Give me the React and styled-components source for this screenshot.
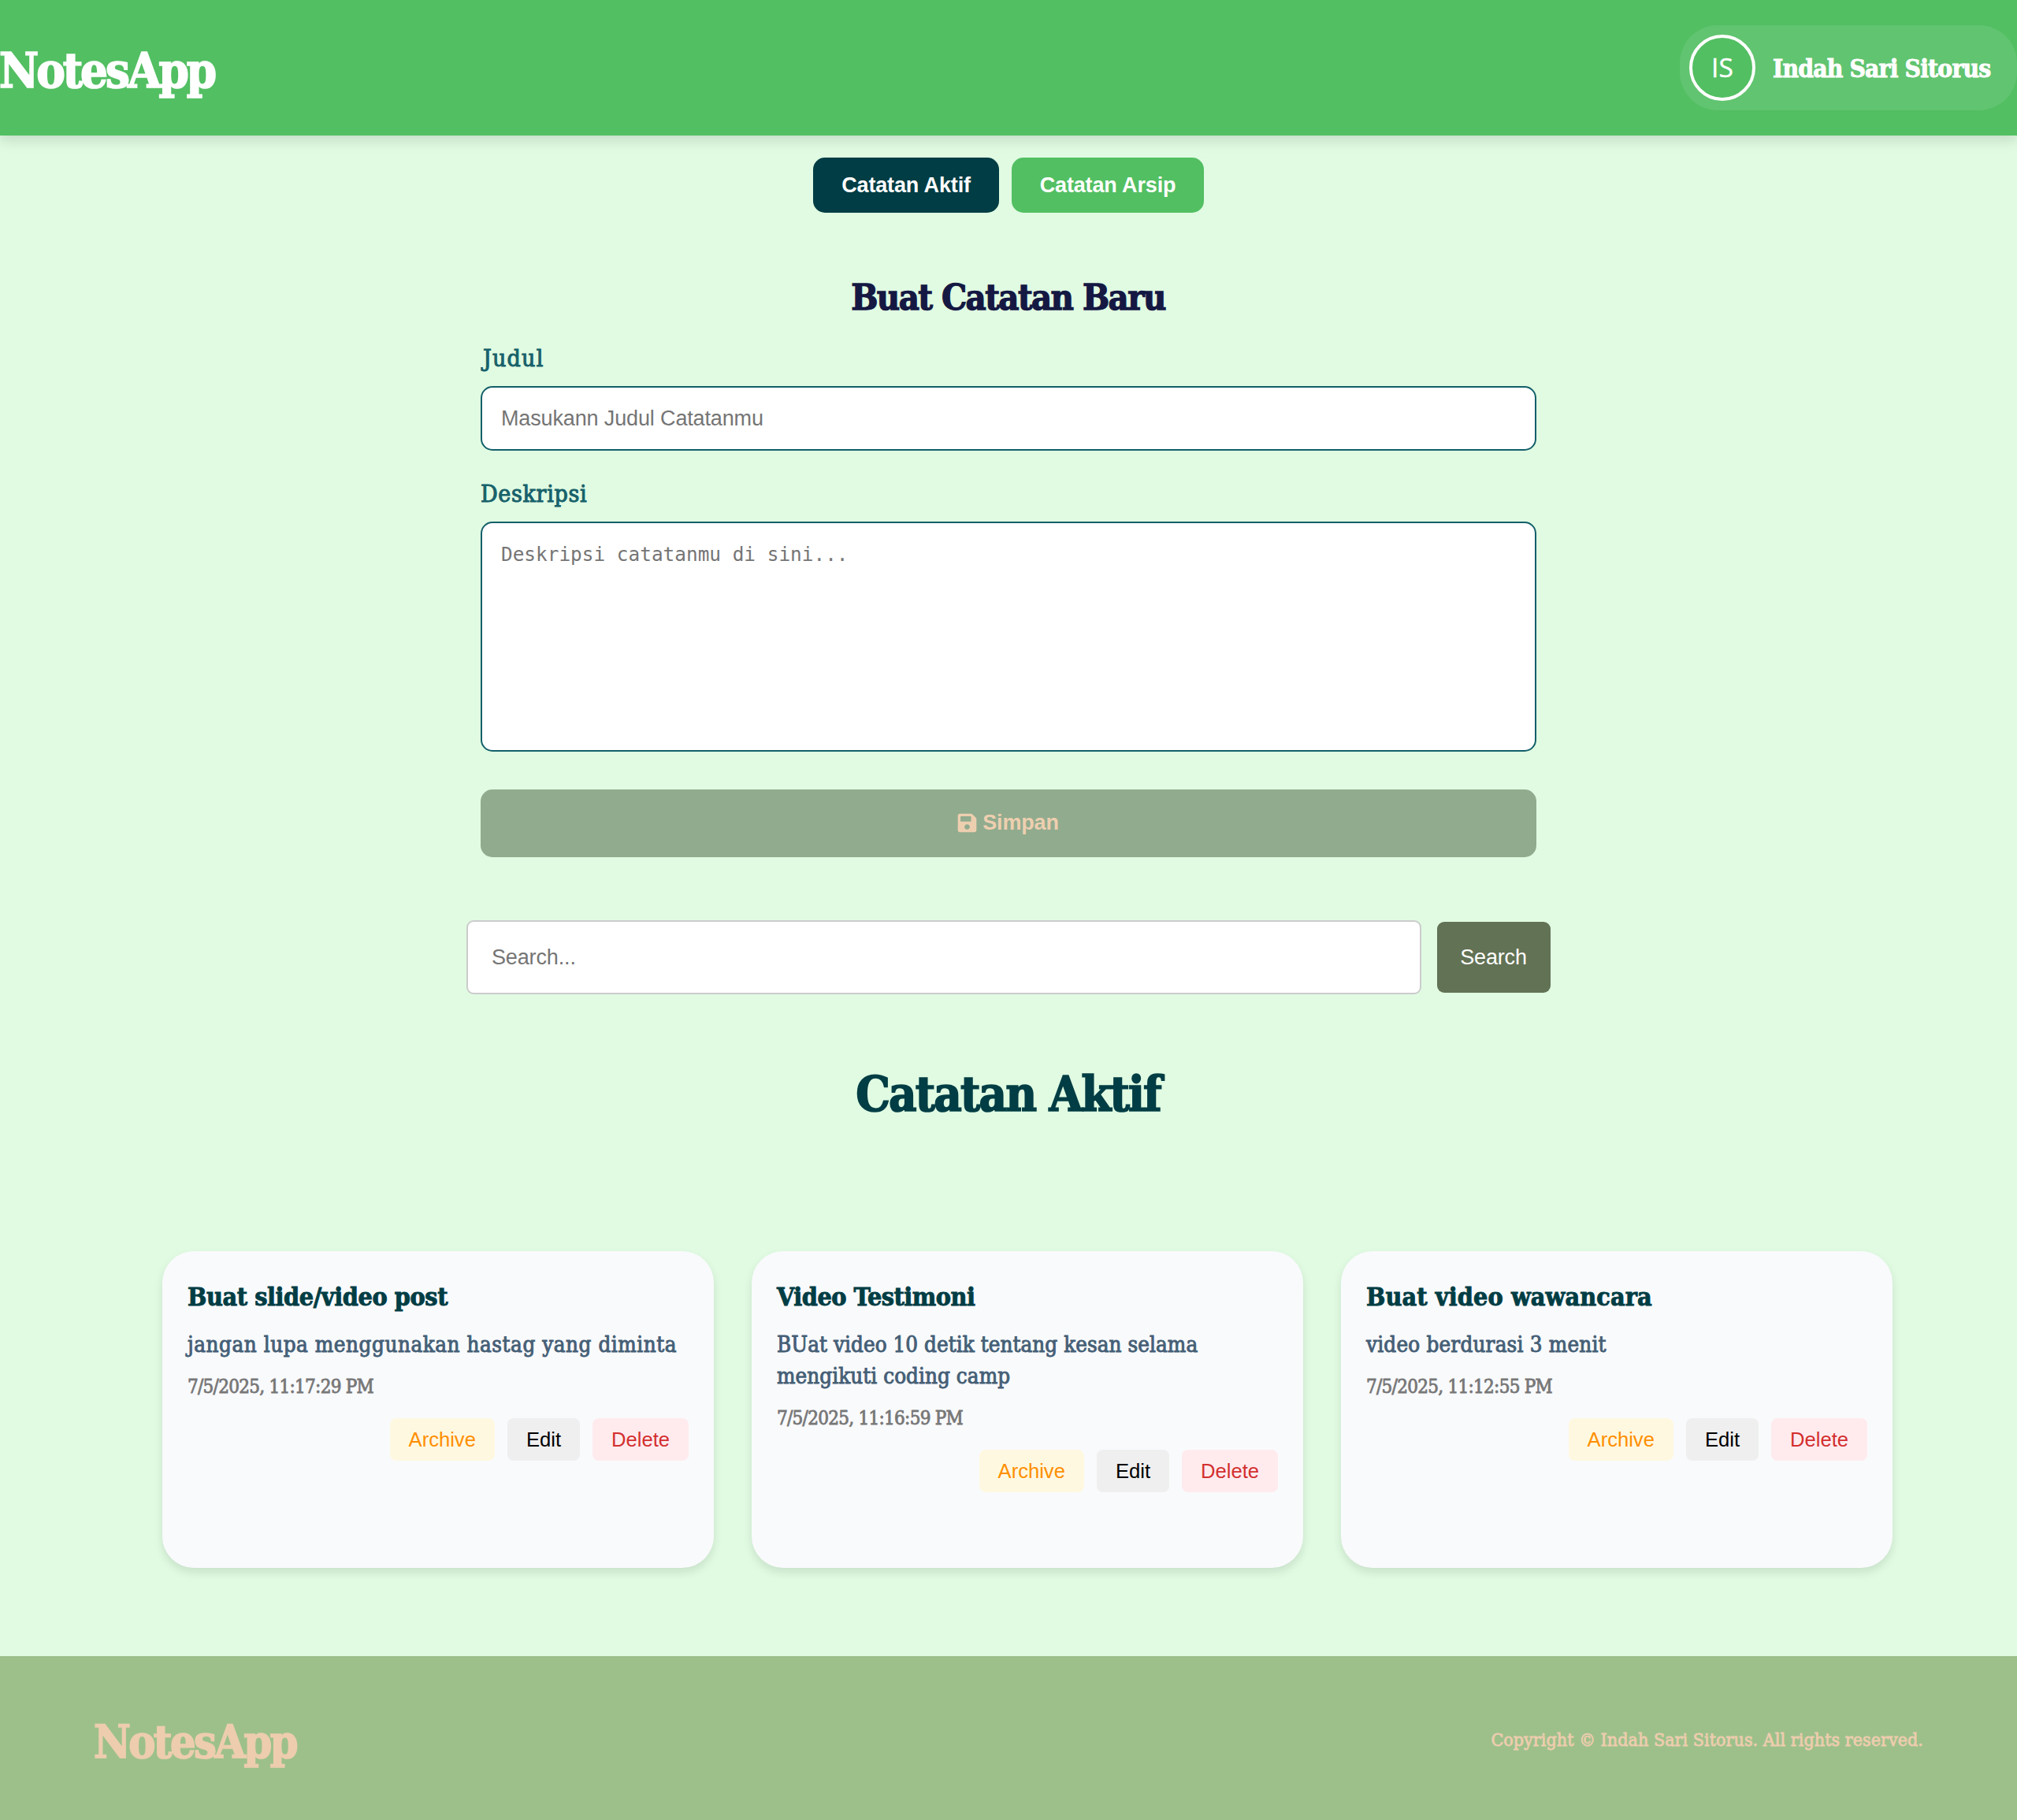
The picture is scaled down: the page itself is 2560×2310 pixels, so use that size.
import React from 'react';
import styled, { createGlobalStyle, css } from 'styled-components';
import { FaSave } from 'react-icons/fa';

const GlobalStyle = createGlobalStyle`
  *, *::before, *::after { box-sizing: border-box; }
  body {
    margin: 0;
    background: #e0fbe2;
    font-family: "DejaVu Serif Condensed", "DejaVu Serif", serif;
  }
  h1, h2, h3, p { margin: 0; }
  button, input { font-family: "Liberation Sans", Arial, sans-serif; }
`;

const slab = css`
  font-family: "DejaVu Serif Condensed", "DejaVu Serif", serif;
  font-stretch: condensed;
`;

const slabBold = css`
  ${slab}
  font-weight: 700;
  -webkit-text-stroke: 0.028em currentColor;
`;

const slabText = css`
  ${slab}
  font-weight: 400;
  -webkit-text-stroke: 0.034em currentColor;
`;

const controlText = css`
  font-size: 27px;
  letter-spacing: -0.14px;
`;

const Page = styled.div`
  display: flex;
  flex-direction: column;
  min-height: 2310px;
`;

const Header = styled.header`
  display: flex;
  align-items: center;
  justify-content: space-between;
  height: 172px;
  background: #52bf62;
  box-shadow: 0 6px 16px rgba(0, 0, 0, 0.13);
`;

const Logo = styled.h1`
  ${slabBold}
  margin-left: -1px;
  padding-top: 6px;
  font-size: 61px;
  letter-spacing: -3px;
  color: #fff;
`;

const Profile = styled.div`
  display: flex;
  align-items: center;
  gap: 22px;
  width: 428px;
  height: 108px;
  padding: 12px;
  border-radius: 48px;
  background: rgba(255, 255, 255, 0.09);
`;

const Avatar = styled.div`
  display: flex;
  flex: none;
  align-items: center;
  justify-content: center;
  width: 84px;
  height: 84px;
  border: 4px solid #fff;
  border-radius: 50%;
  background: #52bf62;
  color: #fff;
  font: 400 33.6px/1 "Open Sans", "Noto Sans", sans-serif;
  -webkit-text-stroke: 0.4px currentColor;
`;

const UserName = styled.span`
  ${slabBold}
  padding-top: 1px;
  font-size: 31.5px;
  letter-spacing: -0.85px;
  white-space: nowrap;
  color: #fff;
`;

const Tabs = styled.nav`
  display: flex;
  justify-content: center;
  gap: 16px;
  margin-top: 28px;
`;

const Tab = styled.button`
  ${controlText}
  height: 70px;
  width: ${(p) => p.$width}px;
  padding: 0;
  border: 0;
  border-radius: 15px;
  background: ${(p) => (p.$active ? '#003d44' : '#52bf62')};
  color: #fff;
  font-weight: 700;
`;

const Form = styled.form`
  display: flex;
  flex-direction: column;
  width: 1340px;
  margin: 78px auto 0;
`;

const FormTitle = styled.h2`
  ${slabBold}
  margin-bottom: 27px;
  padding-right: 1px;
  font-size: 45px;
  line-height: 60px;
  letter-spacing: -1.6px;
  text-align: center;
  color: #141842;
`;

const Label = styled.label`
  ${slabText}
  margin-bottom: 15px;
  padding-left: ${(p) => p.$indent || 0}px;
  font-size: 30px;
  line-height: 40px;
  letter-spacing: ${(p) => p.$tracking}px;
  color: #17616a;
`;

const field = css`
  border: 2px solid #125f69;
  border-radius: 15px;
  background: #fff;
  outline: none;
  &::placeholder { color: #757575; opacity: 1; }
`;

const TitleInput = styled.input`
  ${field}
  ${controlText}
  height: 82px;
  margin-bottom: 35px;
  padding: 0 24px;
`;

const BodyInput = styled.textarea`
  ${field}
  height: 292px;
  margin: 0 0 48px;
  padding: 25px 24px;
  resize: none;
  font: 24.4px "DejaVu Sans Mono", monospace;
`;

const SaveButton = styled.button`
  ${controlText}
  display: flex;
  align-items: center;
  justify-content: center;
  gap: 6px;
  height: 86px;
  padding: 0 6px 1px 4px;
  border: 0;
  border-radius: 15px;
  background: #91ab8e;
  color: #edcfb0;
  font-weight: 700;
`;

const SearchBar = styled.div`
  display: flex;
  align-items: center;
  gap: 20px;
  width: 1376px;
  margin: 80px auto 0;
`;

const SearchInput = styled.input`
  ${controlText}
  flex: 1;
  height: 94px;
  padding: 0 30px;
  border: 2px solid #ccc;
  border-radius: 9px;
  background: #fff;
  outline: none;
  &::placeholder { color: #757575; opacity: 1; }
`;

const SearchButton = styled.button`
  ${controlText}
  width: 144px;
  height: 90px;
  padding: 0 1px 0 0;
  border: 0;
  border-radius: 9px;
  background: #627254;
  color: #fff;
`;

const SectionTitle = styled.h2`
  ${slabBold}
  margin-top: 87px;
  padding-right: 1px;
  font-size: 61px;
  line-height: 80px;
  letter-spacing: -1.85px;
  text-align: center;
  color: #003d44;
`;

const NoteGrid = styled.main`
  display: grid;
  grid-template-columns: repeat(3, 700px);
  gap: 48px;
  margin: 159px 0 112px 206px;
`;

const Card = styled.article`
  height: 402px;
  padding: 36px 32px 32px;
  border-radius: 40px;
  background: #f9fafc;
  box-shadow: 0 6px 12px rgba(0, 0, 0, 0.1);
`;

const NoteTitle = styled.h3`
  ${slabBold}
  margin-bottom: 17px;
  font-size: 32px;
  line-height: 45px;
  letter-spacing: ${(p) => p.$tracking}px;
  color: #003d44;
`;

const NoteBody = styled.p`
  ${slabText}
  margin-bottom: 17px;
  font-size: 27.5px;
  line-height: 40px;
  letter-spacing: ${(p) => p.$tracking}px;
  color: #455f76;
`;

const NoteDate = styled.p`
  ${slabText}
  margin-bottom: 23px;
  font-size: 24px;
  line-height: 34px;
  letter-spacing: -0.72px;
  color: #777;
`;

const Actions = styled.div`
  display: flex;
  justify-content: flex-end;
  gap: 16px;
`;

const tones = {
  archive: css`background: #fff8e1; color: #ff8f00;`,
  edit: css`background: #efefef; color: #000;`,
  remove: css`background: #ffebee; color: #d32f2f;`,
};

const ActionButton = styled.button`
  height: 54px;
  padding: 0 24px;
  border: 0;
  border-radius: 8px;
  font-size: 25.6px;
  ${(p) => tones[p.$tone]}
`;

const Footer = styled.footer`
  display: flex;
  align-items: center;
  justify-content: space-between;
  height: 208px;
  padding: 0 119px;
  background: #9dc08b;
  color: #edcdae;
`;

const FooterLogo = styled.h2`
  ${slabBold}
  padding-top: 8px;
  font-size: 57px;
  letter-spacing: -2.6px;
`;

const Copyright = styled.p`
  ${slabText}
  padding-top: 3px;
  font-size: 23px;
  letter-spacing: 0.06px;
`;

const notes = [
  {
    title: 'Buat slide/video post',
    body: 'jangan lupa menggunakan hastag yang diminta',
    date: '7/5/2025, 11:17:29 PM',
    titleTracking: -0.4,
    bodyTracking: 0.57,
  },
  {
    title: 'Video Testimoni',
    body: 'BUat video 10 detik tentang kesan selama mengikuti coding camp',
    date: '7/5/2025, 11:16:59 PM',
    titleTracking: -0.46,
    bodyTracking: 0.08,
  },
  {
    title: 'Buat video wawancara',
    body: 'video berdurasi 3 menit',
    date: '7/5/2025, 11:12:55 PM',
    titleTracking: 0.12,
    bodyTracking: 0.22,
  },
];

function NoteCard({ note }) {
  return (
    <Card>
      <NoteTitle $tracking={note.titleTracking}>{note.title}</NoteTitle>
      <NoteBody $tracking={note.bodyTracking}>{note.body}</NoteBody>
      <NoteDate>{note.date}</NoteDate>
      <Actions>
        <ActionButton $tone="archive">Archive</ActionButton>
        <ActionButton $tone="edit">Edit</ActionButton>
        <ActionButton $tone="remove">Delete</ActionButton>
      </Actions>
    </Card>
  );
}

export default function App() {
  return (
    <Page>
      <GlobalStyle />
      <Header>
        <Logo>NotesApp</Logo>
        <Profile>
          <Avatar>IS</Avatar>
          <UserName>Indah Sari Sitorus</UserName>
        </Profile>
      </Header>
      <Tabs>
        <Tab $active $width={236}>Catatan Aktif</Tab>
        <Tab $width={244}>Catatan Arsip</Tab>
      </Tabs>
      <Form onSubmit={(e) => e.preventDefault()}>
        <FormTitle>Buat Catatan Baru</FormTitle>
        <Label htmlFor="title" $tracking={1.2} $indent={3}>Judul</Label>
        <TitleInput id="title" placeholder="Masukann Judul Catatanmu" />
        <Label htmlFor="body" $tracking={0.7}>Deskripsi</Label>
        <BodyInput id="body" placeholder="Deskripsi catatanmu di sini..." />
        <SaveButton type="submit">
          <FaSave />
          Simpan
        </SaveButton>
      </Form>
      <SearchBar>
        <SearchInput placeholder="Search..." />
        <SearchButton>Search</SearchButton>
      </SearchBar>
      <SectionTitle>Catatan Aktif</SectionTitle>
      <NoteGrid>
        {notes.map((note) => (
          <NoteCard key={note.title} note={note} />
        ))}
      </NoteGrid>
      <Footer>
        <FooterLogo>NotesApp</FooterLogo>
        <Copyright>Copyright © Indah Sari Sitorus. All rights reserved.</Copyright>
      </Footer>
    </Page>
  );
}
